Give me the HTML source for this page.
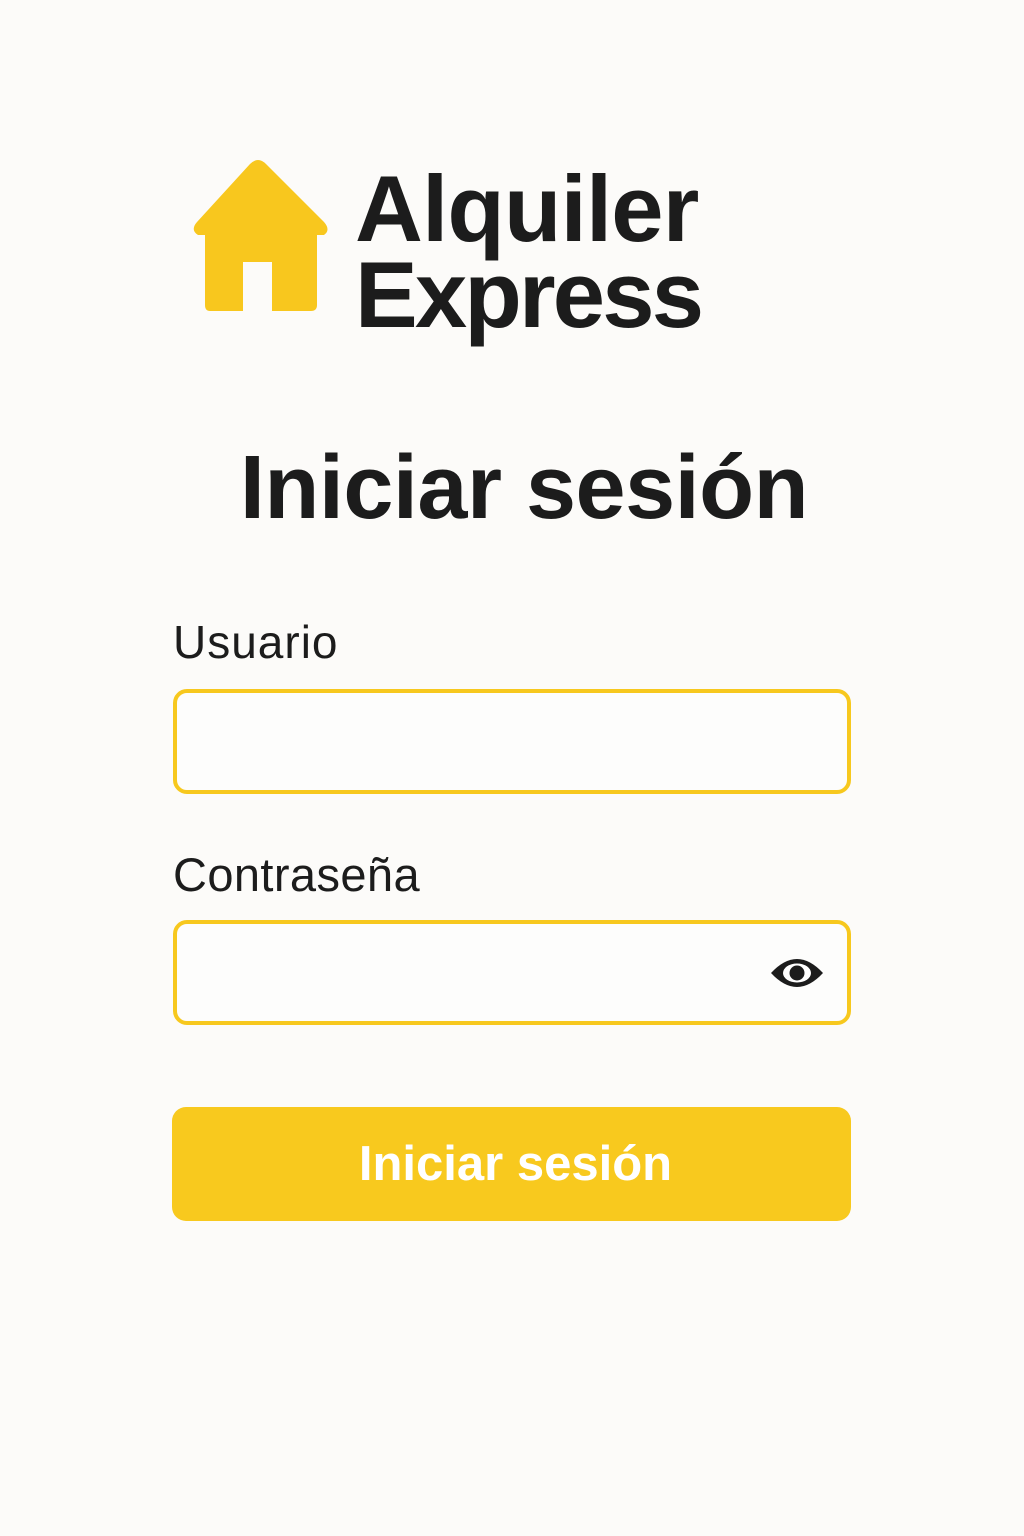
<!DOCTYPE html>
<html><head><meta charset="utf-8"><style>
html,body{margin:0;padding:0;background:#fcfbf9;width:1024px;height:1536px;overflow:hidden;font-family:"Liberation Sans",sans-serif;color:#1c1c1c}
.abs{position:absolute}
.logo{left:355px;font-weight:bold;font-size:94px;letter-spacing:-2px;line-height:1}
.lbl{left:173px;font-size:46px;line-height:1}
.inp{left:173px;width:670px;height:97px;border:4px solid #f7c81e;border-radius:14px;background:#fdfdfc}
</style></head><body>
<svg class="abs" style="left:190px;top:155px" width="142" height="160" viewBox="190 155 142 160">
<path d="M258 160 Q262 160 266 164 L324 222 Q331 230 324 235 L317 235 L317 305 Q317 311 311 311 L272 311 L272 262 L243 262 L243 311 L210 311 Q205 311 205 305 L205 235 L198 235 Q190 230 197 222 L250 164 Q254 160 258 160Z" fill="#f8c71e"/>
</svg>
<div class="abs logo" style="top:162px;letter-spacing:-0.8px">Alquiler</div>
<div class="abs logo" style="top:248px;letter-spacing:-2.8px">Express</div>
<div class="abs" style="left:0;width:1024px;text-align:center;top:437px;font-weight:bold;font-size:90px;letter-spacing:-0.5px;padding-left:24px;box-sizing:border-box">Iniciar sesión</div>
<div class="abs lbl" style="top:619px;letter-spacing:1px">Usuario</div>
<div class="abs inp" style="top:689px"></div>
<div class="abs lbl" style="top:851px;font-size:47px;letter-spacing:0.4px">Contraseña</div>
<div class="abs inp" style="top:920px"></div>
<svg class="abs" style="left:770px;top:955px" width="54" height="36" viewBox="0 0 54 36">
<path d="M1 18 Q27 -10 53 18 Q27 46 1 18Z" fill="#1c1c1c"/>
<ellipse cx="27" cy="18" rx="14" ry="9.5" fill="#fff"/>
<circle cx="27" cy="18" r="7.5" fill="#1c1c1c"/>
</svg>
<div class="abs" style="left:172px;top:1107px;width:679px;height:114px;background:#f8c91e;border-radius:14px;color:#fff;font-weight:bold;font-size:49px;text-align:center;line-height:114px;padding-left:8px;box-sizing:border-box">Iniciar sesión</div>
</body></html>
